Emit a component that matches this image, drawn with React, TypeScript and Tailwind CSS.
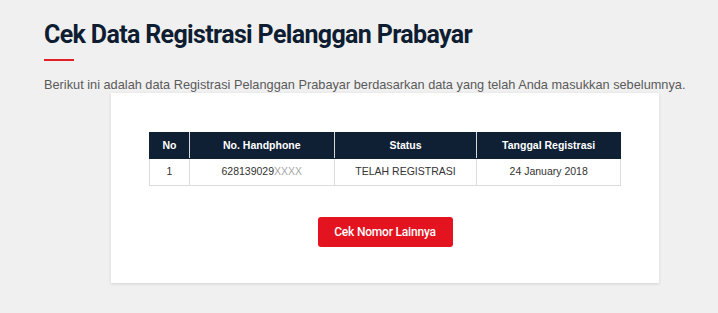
export default function App() {
  return (
    <div className="w-[718px] h-[313px] bg-[#f0f0f0] overflow-hidden font-['Liberation_Sans',Arial,sans-serif]">
      <div className="pl-[44px] pt-[20px]">
        <h1 className="font-['Roboto',sans-serif] text-[25px] leading-[30px] font-bold text-[#0e1d31] tracking-[-0.65px]">
          Cek Data Registrasi Pelanggan Prabayar
        </h1>
        <div className="mt-[9px] w-[30px] h-[2px] bg-[#e01f26]" />
        <p className="mt-[16px] text-[12.75px] leading-[16px] text-[#5a5a5a]">
          Berikut ini adalah data Registrasi Pelanggan Prabayar berdasarkan data yang telah Anda masukkan sebelumnya.
        </p>
      </div>

      <div className="ml-[111px] w-[548px] h-[190px] bg-white shadow-[0_1px_3px_rgba(0,0,0,0.12)] flex flex-col items-center pt-[39px]">
        <table className="w-[472px] border-collapse text-[10.5px] text-center">
          <thead>
            <tr className="bg-[#0f2035] text-white font-bold h-[26px]">
              <th className="w-[40px] border border-[#0f2035] border-r-[#d8d8d8]">No</th>
              <th className="w-[145px] border border-[#0f2035] border-r-[#d8d8d8]">No. Handphone</th>
              <th className="w-[143px] border border-[#0f2035] border-r-[#d8d8d8]">Status</th>
              <th className="w-[144px] border border-[#0f2035]">Tanggal Registrasi</th>
            </tr>
          </thead>
          <tbody>
            <tr className="h-[27px] text-[#333]">
              <td className="border border-[#dcdcdc]">1</td>
              <td className="border border-[#dcdcdc]">
                628139029<span className="text-[#a8a8a8]">XXXX</span>
              </td>
              <td className="border border-[#dcdcdc]">TELAH REGISTRASI</td>
              <td className="border border-[#dcdcdc]">24 January 2018</td>
            </tr>
          </tbody>
        </table>

        <button className="mt-[31px] w-[135px] h-[30px] rounded-[3px] bg-[#e3131f] text-white font-['Roboto',sans-serif] text-[12px] font-medium tracking-[-0.2px]">
          Cek Nomor Lainnya
        </button>
      </div>
    </div>
  );
}
